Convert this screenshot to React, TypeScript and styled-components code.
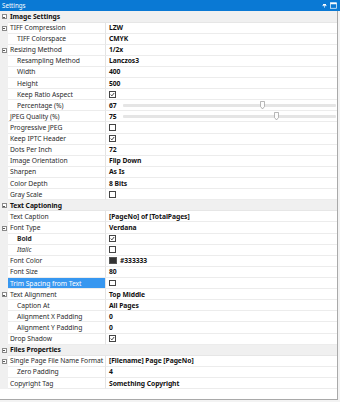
import React from 'react';
import styled, { createGlobalStyle } from 'styled-components';

const GlobalStyle = createGlobalStyle`
  html, body {
    margin: 0;
    padding: 0;
    background: #f3f3f3;
  }
  body {
    font-family: "Noto Sans", "Open Sans", sans-serif;
  }
`;

const ROW_H = 11.12;

const Frame = styled.div`
  width: 340px;
  height: 402px;
  box-sizing: border-box;
  padding-right: 2px;
  background: #f3f3f3;
  display: flex;
  flex-direction: column;
`;

const TitleBar = styled.div`
  height: 11.4px;
  flex-shrink: 0;
  background: #0a79d4;
  display: flex;
  align-items: center;
  padding: 0 3px 0 2px;
  margin-right: -2px;
  gap: 4px;
  color: #fff;
  font-size: 6.2px;
  line-height: 1;
`;

const Grip = styled.div`
  flex: 1;
  height: 4px;
  background-image: radial-gradient(circle, rgba(255, 255, 255, 0.28) 0.5px, transparent 0.7px);
  background-size: 2px 2px;
  margin-left: 12px;
`;

const TitleIcons = styled.div`
  display: flex;
  align-items: center;
  gap: 3px;
`;

const Grid = styled.div`
  flex: 1;
  background: #fff;
  border-right: 1px solid #a9a9a9;
  border-bottom: 1px solid #a9a9a9;
  margin-bottom: 2px;
  display: flex;
  flex-direction: column;
  font-size: 6.75px;
  letter-spacing: -0.06px;
  color: #222;
`;

const Row = styled.div<{ $category?: boolean }>`
  height: ${ROW_H}px;
  flex-shrink: 0;
  display: grid;
  grid-template-columns: 8px 98px 1fr;
  background: ${({ $category }) => ($category ? '#f0f0f0' : '#fff')};
`;

const Gutter = styled.div`
  background: #f0f0f0;
  display: flex;
  align-items: center;
  justify-content: center;
`;

const NameCell = styled.div<{ $depth: number; $selected?: boolean; $bold?: boolean; $italic?: boolean }>`
  box-sizing: border-box;
  display: flex;
  align-items: center;
  padding-left: ${({ $depth }) => 2 + $depth * 7}px;
  border-right: 1px solid #e4e4e4;
  border-bottom: 1px solid #ececec;
  background: ${({ $selected }) => ($selected ? '#3797f0' : 'transparent')};
  color: ${({ $selected }) => ($selected ? '#fff' : '#2b2b2b')};
  font-weight: ${({ $bold }) => ($bold ? 700 : 400)};
  font-style: ${({ $italic }) => ($italic ? 'italic' : 'normal')};
  white-space: nowrap;
  overflow: hidden;
`;

const CategoryCell = styled.div`
  grid-column: 2 / 4;
  display: flex;
  align-items: center;
  padding-left: 2px;
  font-weight: 700;
  color: #111;
  border-bottom: 1px solid #e6e6e6;
`;

const ValueCell = styled.div`
  box-sizing: border-box;
  display: flex;
  align-items: center;
  padding-left: 3px;
  padding-right: 1px;
  gap: 3px;
  border-bottom: 1px solid #ececec;
  font-weight: 700;
  color: #111;
  white-space: nowrap;
  overflow: hidden;
`;

const Expander = styled.span`
  width: 5px;
  height: 5px;
  box-sizing: border-box;
  border: 0.8px solid #8a8a8a;
  background: #fff;
  position: relative;

  &::after {
    content: '';
    position: absolute;
    left: 0.8px;
    right: 0.8px;
    top: 1.6px;
    height: 0.8px;
    background: #555;
  }
`;

const CheckBox = styled.span`
  width: 6.8px;
  height: 6.8px;
  box-sizing: border-box;
  border: 0.8px solid #444;
  background: #fff;
  display: flex;
  align-items: center;
  justify-content: center;
`;

const SliderNumber = styled.span`
  width: 11px;
  flex-shrink: 0;
`;

const Track = styled.div`
  flex: 1;
  height: 3.6px;
  background: #e5e5e5;
  border-radius: 1px;
  position: relative;
`;

const Thumb = styled.svg`
  position: absolute;
  top: -2.6px;
  margin-left: -2.5px;
`;

const Swatch = styled.span<{ $color: string }>`
  width: 8px;
  height: 7px;
  background: ${({ $color }) => $color};
  border: 0.6px solid #555;
  box-sizing: border-box;
`;

type Value =
  | { kind: 'text'; text: string }
  | { kind: 'check'; checked: boolean }
  | { kind: 'slider'; value: number; pos: number }
  | { kind: 'color'; color: string; text: string };

type Item =
  | { type: 'category'; name: string }
  | {
      type: 'prop';
      name: string;
      depth: number;
      value: Value;
      expander?: boolean;
      selected?: boolean;
      bold?: boolean;
      italic?: boolean;
    };

const t = (text: string): Value => ({ kind: 'text', text });
const c = (checked: boolean): Value => ({ kind: 'check', checked });

const items: Item[] = [
  { type: 'category', name: 'Image Settings' },
  { type: 'prop', name: 'TIFF Compression', depth: 0, value: t('LZW'), expander: true },
  { type: 'prop', name: 'TIFF Colorspace', depth: 1, value: t('CMYK') },
  { type: 'prop', name: 'Resizing Method', depth: 0, value: t('1/2x'), expander: true },
  { type: 'prop', name: 'Resampling Method', depth: 1, value: t('Lanczos3') },
  { type: 'prop', name: 'Width', depth: 1, value: t('400') },
  { type: 'prop', name: 'Height', depth: 1, value: t('500') },
  { type: 'prop', name: 'Keep Ratio Aspect', depth: 1, value: c(true) },
  { type: 'prop', name: 'Percentage (%)', depth: 1, value: { kind: 'slider', value: 67, pos: 65.3 } },
  { type: 'prop', name: 'JPEG Quality (%)', depth: 0, value: { kind: 'slider', value: 75, pos: 72 } },
  { type: 'prop', name: 'Progressive JPEG', depth: 0, value: c(false) },
  { type: 'prop', name: 'Keep IPTC Header', depth: 0, value: c(true) },
  { type: 'prop', name: 'Dots Per Inch', depth: 0, value: t('72') },
  { type: 'prop', name: 'Image Orientation', depth: 0, value: t('Flip Down') },
  { type: 'prop', name: 'Sharpen', depth: 0, value: t('As Is') },
  { type: 'prop', name: 'Color Depth', depth: 0, value: t('8 Bits') },
  { type: 'prop', name: 'Gray Scale', depth: 0, value: c(false) },
  { type: 'category', name: 'Text Captioning' },
  { type: 'prop', name: 'Text Caption', depth: 0, value: t('[PageNo] of [TotalPages]') },
  { type: 'prop', name: 'Font Type', depth: 0, value: t('Verdana'), expander: true },
  { type: 'prop', name: 'Bold', depth: 1, value: c(true), bold: true },
  { type: 'prop', name: 'Italic', depth: 1, value: c(false), italic: true },
  { type: 'prop', name: 'Font Color', depth: 0, value: { kind: 'color', color: '#333333', text: '#333333' } },
  { type: 'prop', name: 'Font Size', depth: 0, value: t('80') },
  { type: 'prop', name: 'Trim Spacing from Text', depth: 0, value: c(false), selected: true },
  { type: 'prop', name: 'Text Alignment', depth: 0, value: t('Top Middle'), expander: true },
  { type: 'prop', name: 'Caption At', depth: 1, value: t('All Pages') },
  { type: 'prop', name: 'Alignment X Padding', depth: 1, value: t('0') },
  { type: 'prop', name: 'Alignment Y Padding', depth: 1, value: t('0') },
  { type: 'prop', name: 'Drop Shadow', depth: 0, value: c(true) },
  { type: 'category', name: 'Files Properties' },
  { type: 'prop', name: 'Single Page File Name Format', depth: 0, value: t('[Filename] Page [PageNo]'), expander: true },
  { type: 'prop', name: 'Zero Padding', depth: 1, value: t('4') },
  { type: 'prop', name: 'Copyright Tag', depth: 0, value: t('Something Copyright') },
];

const Check = () => (
  <svg width="5" height="5" viewBox="0 0 10 10">
    <path d="M1.5 5.2 L4 7.8 L8.6 2" fill="none" stroke="#222" strokeWidth="1.8" />
  </svg>
);

const renderValue = (v: Value) => {
  switch (v.kind) {
    case 'text':
      return v.text;
    case 'check':
      return <CheckBox>{v.checked && <Check />}</CheckBox>;
    case 'slider':
      return (
        <>
          <SliderNumber>{v.value}</SliderNumber>
          <Track>
            <Thumb width="5" height="8.5" viewBox="0 0 10 17" style={{ left: `${v.pos}%` }}>
              <path d="M1 1 H9 V11 L5 16 L1 11 Z" fill="#fdfdfd" stroke="#9a9a9a" strokeWidth="1.4" />
            </Thumb>
          </Track>
        </>
      );
    case 'color':
      return (
        <>
          <Swatch $color={v.color} />
          {v.text}
        </>
      );
  }
};

const App: React.FC = () => {
  return (
    <>
      <GlobalStyle />
      <Frame>
        <TitleBar>
          <span>Settings</span>
          <Grip />
          <TitleIcons>
            <svg width="5" height="5" viewBox="0 0 10 10">
              <rect x="2" y="2" width="6" height="3" fill="#fff" />
              <rect x="0.5" y="5" width="9" height="1.2" fill="#fff" />
              <rect x="4.4" y="6" width="1.2" height="3.5" fill="#fff" />
            </svg>
            <svg width="7" height="7" viewBox="0 0 14 14">
              <rect x="1" y="1.5" width="12" height="11" fill="none" stroke="#fff" strokeWidth="1.4" />
              <rect x="1" y="1.5" width="12" height="3" fill="#fff" />
            </svg>
          </TitleIcons>
        </TitleBar>
        <Grid>
          {items.map((item) =>
            item.type === 'category' ? (
              <Row key={item.name} $category>
                <Gutter>
                  <Expander />
                </Gutter>
                <CategoryCell>{item.name}</CategoryCell>
              </Row>
            ) : (
              <Row key={item.name}>
                <Gutter>{item.expander && <Expander />}</Gutter>
                <NameCell
                  $depth={item.depth}
                  $selected={item.selected}
                  $bold={item.bold}
                  $italic={item.italic}
                >
                  {item.name}
                </NameCell>
                <ValueCell>{renderValue(item.value)}</ValueCell>
              </Row>
            )
          )}
        </Grid>
      </Frame>
    </>
  );
};

export default App;
